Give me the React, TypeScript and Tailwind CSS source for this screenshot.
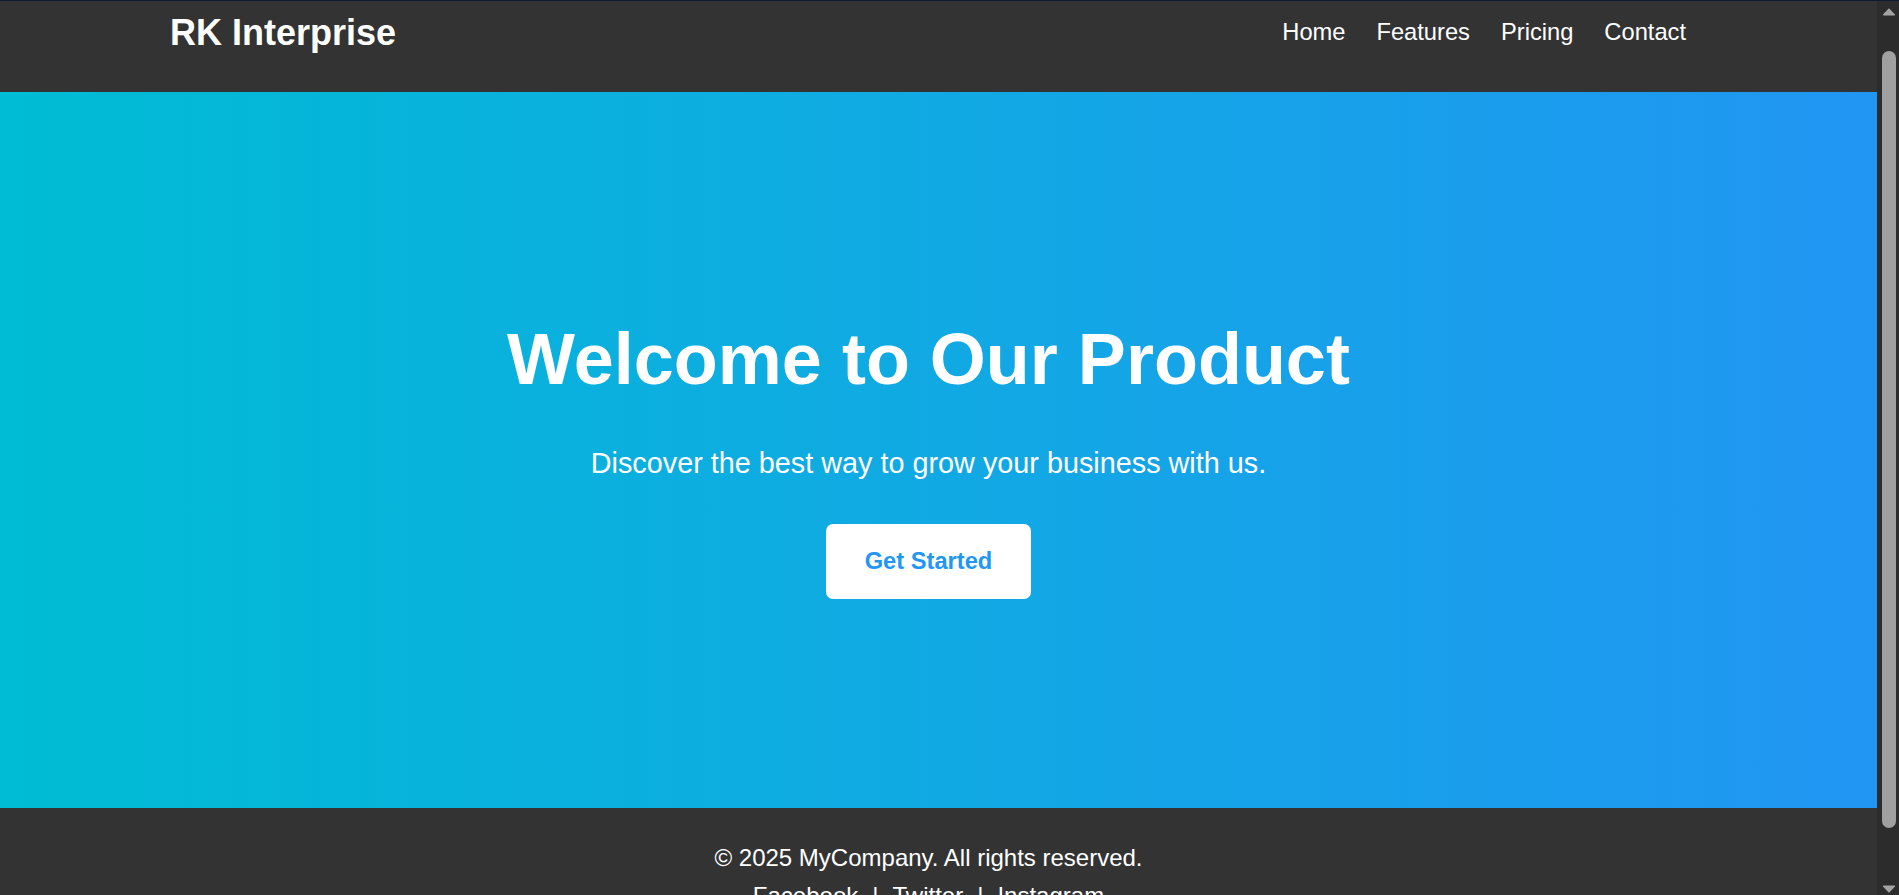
import React from "react";

function ScrollArrow({ down }: { down?: boolean }) {
  return (
    <svg width="14" height="8" viewBox="0 0 14 8" className="block">
      {down ? (
        <path d="M1 1.5 Q0.5 0.5 1.8 0.5 L12.2 0.5 Q13.5 0.5 13 1.5 L7.6 7.2 Q7 7.8 6.4 7.2 Z" fill="#a3a3a3" />
      ) : (
        <path d="M1 6.5 Q0.5 7.5 1.8 7.5 L12.2 7.5 Q13.5 7.5 13 6.5 L7.6 0.8 Q7 0.2 6.4 0.8 Z" fill="#a3a3a3" />
      )}
    </svg>
  );
}

export default function App() {
  return (
    <div className="flex h-screen flex-col bg-[#333333] font-['Liberation_Sans',Arial,sans-serif] text-white">
      <div className="h-px shrink-0 bg-[#111a30]" />
      <div className="flex min-h-0 flex-1">
        <div className="min-w-0 flex-1 overflow-y-auto [scrollbar-width:none]">
          <header className="h-[91px] bg-[#333333]">
            <div className="ml-[169px] flex w-[1519px] items-start justify-between">
              <div className="pl-[1px] pt-[11px] text-[36px] font-bold leading-[1.15]">RK Interprise</div>
              <nav className="mr-[2px] flex gap-[31px] pt-[18px] text-[23.7px] leading-[1.15]">
                <a href="#">Home</a>
                <a href="#">Features</a>
                <a href="#">Pricing</a>
                <a href="#">Contact</a>
              </nav>
            </div>
          </header>

          <section className="h-[716px] bg-[linear-gradient(to_right,#00bcd4,#2196f3)]">
            <div className="ml-[169px] flex w-[1519px] flex-col items-center pt-[226px]">
              <h1 className="whitespace-nowrap text-[72px] font-bold leading-[1.15]">Welcome to Our Product</h1>
              <p className="mt-[46px] whitespace-nowrap text-[28.8px] leading-[1.15]">
                Discover the best way to grow your business with us.
              </p>
              <button className="mt-[44px] flex h-[75px] w-[205px] items-center justify-center rounded-[7px] bg-white text-[23.7px] font-bold leading-[1.15] text-[#2196f3]">
                Get Started
              </button>
            </div>
          </section>

          <footer className="bg-[#333333] pb-[36px] pt-[36px]">
            <div className="ml-[169px] flex w-[1519px] flex-col items-center text-[24px] leading-[1.15]">
              <p>© 2025 MyCompany. All rights reserved.</p>
              <div className="mt-[10px] flex gap-[14px]">
                <a href="#">Facebook</a>
                <span>|</span>
                <a href="#">Twitter</a>
                <span>|</span>
                <a href="#">Instagram</a>
              </div>
            </div>
          </footer>
        </div>

        <div className="flex w-[22px] shrink-0 flex-col items-center bg-[#2c2c2c] pl-[1px]">
          <div className="mt-[7px]">
            <ScrollArrow />
          </div>
          <div className="mt-[35px] h-[777px] w-[14px] rounded-full bg-[#a0a0a0]" />
          <div className="mb-[2px] mt-auto">
            <ScrollArrow down />
          </div>
        </div>
      </div>
    </div>
  );
}
